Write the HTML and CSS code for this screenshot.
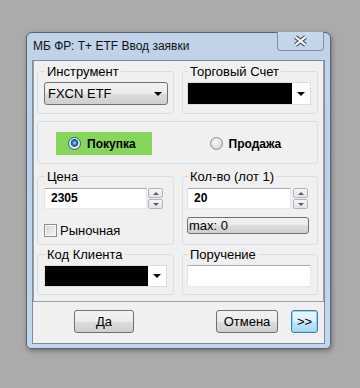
FILE: index.html
```html
<!DOCTYPE html>
<html>

<head>
  <meta charset="utf-8">
  <meta name="viewport" content="width=device-width, initial-scale=1.0">
  <link rel="stylesheet" href="styles.css">
</head>

<body>
  <div class="window">
    <div class="titlebar">
      <span class="title">МБ ФР: T+ ETF Ввод заявки</span>
      <div class="close">
        <svg width="15" height="12" viewBox="0 0 15 12">
          <path d="M2.5 2 L12.5 10 M12.5 2 L2.5 10" stroke="#4a5563" stroke-width="4.2" fill="none" />
          <path d="M2.5 2 L12.5 10 M12.5 2 L2.5 10" stroke="#ffffff" stroke-width="2.2" fill="none" />
        </svg>
      </div>
    </div>
    <div class="client">
      <div class="main">
        <!-- instrument / account -->
        <fieldset class="grp grp_l row1">
          <legend>Инструмент</legend>
          <div class="dropdown">FXCN ETF<span class="arrow"></span></div>
        </fieldset>
        <fieldset class="grp grp_r row1">
          <legend>Торговый Счет</legend>
          <div class="combo combo_acc">
            <div class="black"></div>
            <div class="drop"><span class="arrow"></span></div>
          </div>
        </fieldset>

        <!-- buy / sell -->
        <div class="side_panel">
          <div class="side side_buy">
            <div class="buy"><span class="radio checked"></span>Покупка</div>
          </div>
          <div class="side side_sell"><span class="radio"></span>Продажа</div>
        </div>

        <!-- price / qty -->
        <fieldset class="grp grp_l row3">
          <legend>Цена</legend>
          <div class="spin_field">
            <div class="edit edit_price">2305</div>
            <div class="spinner">
              <div class="spin_btn"><span class="up"></span></div>
              <div class="spin_btn"><span class="down"></span></div>
            </div>
          </div>
          <div class="check_row"><span class="checkbox"></span>Рыночная</div>
        </fieldset>
        <fieldset class="grp grp_r row3">
          <legend>Кол-во (лот 1)</legend>
          <div class="spin_field">
            <div class="edit edit_qty">20</div>
            <div class="spinner spinner_r">
              <div class="spin_btn"><span class="up"></span></div>
              <div class="spin_btn"><span class="down"></span></div>
            </div>
          </div>
          <div class="max_btn">max: 0</div>
        </fieldset>

        <!-- client / order -->
        <fieldset class="grp grp_l row4">
          <legend>Код Клиента</legend>
          <div class="combo combo_client">
            <div class="black"></div>
            <div class="drop"><span class="arrow"></span></div>
          </div>
        </fieldset>
        <fieldset class="grp grp_r row4">
          <legend>Поручение</legend>
          <div class="edit edit_note"></div>
        </fieldset>
      </div>

      <div class="buttons">
        <div class="btn btn_ok">Да</div>
        <div class="btn btn_cancel">Отмена</div>
        <div class="btn btn_more">&gt;&gt;</div>
      </div>
    </div>
  </div>
</body>

</html>
```

FILE: styles.css
```css
* {
  box-sizing: border-box;
}

body {
  margin: 0;
  padding: 0;
  width: 360px;
  height: 388px;
  background-color: #ababab;
  font-family: "Liberation Sans", Arial, sans-serif;
  font-size: 13px;
  color: #000;
  overflow: hidden;
}

.window {
  display: flex;
  flex-direction: column;
  width: 305px;
  height: 317px;
  margin: 32px 0 0 26px;
  border: 1px solid #59636e;
  border-radius: 6px 6px 5px 5px;
  background: linear-gradient(#c0d3e8, #bdd2ea 40%, #c3d7ec);
  box-shadow: 1px 2px 5px rgba(0, 0, 0, 0.35);
}

.titlebar {
  display: flex;
  align-items: center;
  height: 27px;
  padding-left: 6px;
}

.title {
  flex: 1;
  font-size: 12px;
  line-height: 15px;
  color: #111;
}

.close {
  display: flex;
  align-items: center;
  justify-content: center;
  align-self: flex-start;
  width: 47px;
  height: 19px;
  margin: -1px 6px 0 0;
  border: 1px solid #7f91a6;
  border-top: none;
  border-radius: 0 0 4px 4px;
  background: linear-gradient(#c9d9ea, #c1d4e9);
}

.client {
  display: flex;
  flex-direction: column;
  flex: 1;
  margin: 0 5px 4px 5px;
  border: 1px solid #7b8da2;
  background-color: #f0f0f0;
}

.main {
  display: grid;
  grid-template-columns: 137px 136px;
  column-gap: 8px;
  padding: 3px 5px 6px 3px;
  border: 1px solid #a0a0a0;
  border-top: none;
}

/* group boxes */

.grp {
  min-width: 0;
  margin: 0;
  border: 1px solid #d5dfe5;
  border-radius: 3px;
  padding: 3px 5px 8px 6px;
}

.grp legend {
  margin-left: 1px;
  padding: 0 2px;
  font-size: 13px;
  line-height: 15px;
}

.grp_r {
  padding-left: 4px;
}

.grp_r legend {
  margin-left: 1px;
}

.row3 {
  margin-top: 3px;
  padding-top: 4px;
  padding-bottom: 7px;
}

.row4 {
  margin-top: 2px;
  padding-top: 3px;
  padding-bottom: 7px;
}

/* drop downs */

.arrow {
  display: block;
  width: 0;
  height: 0;
  border-left: 4px solid transparent;
  border-right: 4px solid transparent;
  border-top: 4px solid #000;
}

.dropdown {
  display: flex;
  align-items: center;
  justify-content: space-between;
  width: 124px;
  height: 23px;
  padding: 0 5px 0 3px;
  border: 1px solid #707070;
  border-radius: 3px;
  background: linear-gradient(#f2f2f2, #ebebeb 50%, #dddddd 50%, #cfcfcf);
  line-height: 15px;
}

.combo {
  display: flex;
  border: 1px solid #dcdcdc;
  background-color: #fff;
}

.combo .black {
  flex: 1;
  background-color: #000;
}

.combo .drop {
  display: flex;
  align-items: center;
  justify-content: center;
  width: 18px;
}

.combo_acc {
  width: 124px;
  height: 23px;
}

.combo_client {
  width: 123px;
  height: 22px;
}

/* buy / sell */

.side_panel {
  grid-column: 1 / -1;
  display: grid;
  grid-template-columns: 1fr 1fr;
  margin: 7px 0 2px 0;
  padding: 10px 0 8px 0;
  border: 1px solid #d5dfe5;
  border-radius: 3px;
  font-size: 12px;
  font-weight: bold;
}

.side {
  display: flex;
  align-items: center;
}

.side_buy {
  padding-left: 18px;
}

.side_sell {
  padding-left: 32px;
}

.buy {
  display: flex;
  align-items: center;
  width: 96px;
  height: 23px;
  padding-left: 12px;
  background-color: #86d65c;
}

.radio {
  display: inline-block;
  width: 13px;
  height: 13px;
  margin-right: 6px;
  border: 1px solid #8e8f8f;
  border-radius: 50%;
  background: radial-gradient(circle at 45% 40%, #ffffff, #e2e2e2 50%, #c9c9c9);
}

.radio.checked {
  border-color: #3d5b75;
  background: radial-gradient(circle at 50% 45%, #b7e4fa 0, #2b8ad0 1.8px, #164f86 3.5px, #f4f4f4 4.2px, #d9d9d9 6px);
}

/* price / quantity */

.spin_field {
  display: flex;
}

.edit {
  height: 21px;
  padding: 0 6px 1px 6px;
  border: 1px solid;
  border-color: #abadb3 #e3e9ef #e3e9ef #e2e3ea;
  background-color: #fff;
  font-size: 12px;
  font-weight: bold;
  line-height: 18px;
}

.edit_price {
  width: 103px;
}

.edit_qty {
  width: 104px;
}

.edit_note {
  width: 124px;
  height: 22px;
}

.spinner {
  display: flex;
  flex-direction: column;
  gap: 1px;
  width: 15px;
  margin-left: 1px;
}

.spinner_r {
  margin-left: 2px;
}

.spin_btn {
  display: flex;
  align-items: center;
  justify-content: center;
  height: 10px;
  border: 1px solid #b4b4b4;
  border-radius: 2px;
  background: linear-gradient(#f6f6f6, #e4e4e4);
}

.up,
.down {
  width: 0;
  height: 0;
  border-left: 3px solid transparent;
  border-right: 3px solid transparent;
}

.up {
  border-bottom: 3px solid #4c607c;
}

.down {
  border-top: 3px solid #4c607c;
}

.check_row {
  display: flex;
  align-items: center;
  height: 13px;
  margin-top: 15px;
  line-height: 15px;
}

.checkbox {
  width: 13px;
  height: 13px;
  margin-right: 3px;
  border: 1px solid #8e8f8f;
  background: linear-gradient(135deg, #d4d4d4, #f4f4f4);
  box-shadow: inset 0 0 0 1px #f8f8f8;
}

.max_btn {
  width: 122px;
  height: 17px;
  margin-top: 8px;
  padding-left: 1px;
  border: 1px solid #707070;
  border-radius: 3px;
  background: linear-gradient(#f2f2f2, #ebebeb 50%, #dddddd 50%, #cfcfcf);
  line-height: 15px;
}

/* bottom buttons */

.buttons {
  display: flex;
  padding: 8px 6px 0 41px;
}

.btn {
  display: flex;
  align-items: center;
  justify-content: center;
  height: 23px;
  border: 1px solid #707070;
  border-radius: 3px;
  background: linear-gradient(#f2f2f2, #ebebeb 50%, #dddddd 50%, #cfcfcf);
  line-height: 15px;
}

.btn_ok {
  width: 60px;
}

.btn_cancel {
  width: 62px;
  margin-left: auto;
}

.btn_more {
  width: 27px;
  margin-left: 13px;
  border-color: #3c7fb1;
  background: linear-gradient(#eaf6fd, #d9f0fc 50%, #bee6fd 50%, #a7d9f5);
  box-shadow: inset 0 0 0 1px #8fd2f3;
}
```
